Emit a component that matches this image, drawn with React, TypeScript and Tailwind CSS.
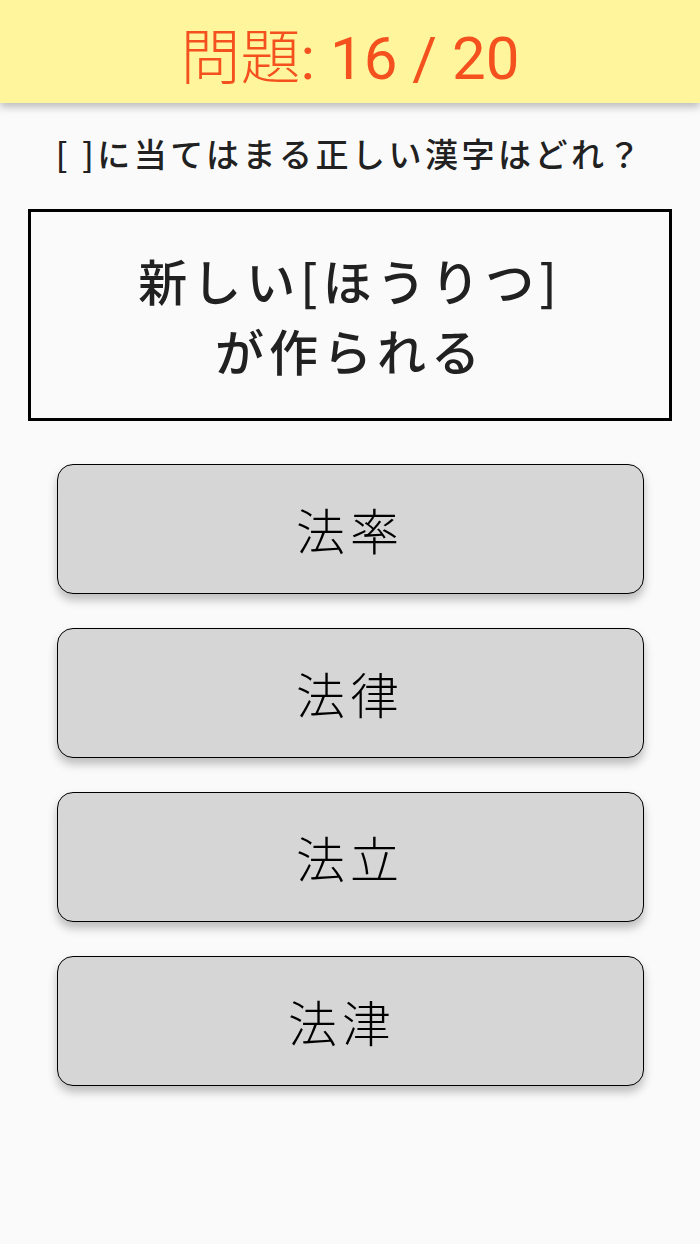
import React from "react";

const FONT = { fontFamily: '"Noto Sans CJK JP", "Noto Sans", sans-serif' };
const HFONT = { fontFamily: 'Roboto, "Noto Sans CJK JP", sans-serif' };

export default function App() {
  const options = ["法率", "法律", "法立", "法津\u00a0"];
  return (
    <div className="w-[700px] h-[1244px] bg-[#fafafa] flex flex-col" style={FONT}>
      <div className="h-[103px] bg-[#fff59d] flex items-center justify-center shadow-[0_4px_8px_rgba(0,0,0,0.25)] relative z-10">
        <span className="text-[60px] text-[#f4511e] leading-none pt-[8px]" style={HFONT}>
          <span className="font-light" style={FONT}>問題</span>
          <span className="font-normal">: 16 / 20</span>
        </span>
      </div>
      <div className="flex flex-col items-center">
        <div className="mt-[30px] text-[33px] leading-[40px] text-[#212121] tracking-[3.5px] font-medium">
          [ ]に当てはまる正しい漢字はどれ？
        </div>
        <div className="mt-[36px] w-[644px] h-[212px] border-[3px] border-black flex flex-col items-center justify-center text-[49px] leading-[70px] font-medium text-[#212121] tracking-[5px]">
          <div>新しい[ほうりつ]</div>
          <div>が作られる</div>
        </div>
        <div className="mt-[43px] flex flex-col gap-[34px]">
          {options.map((o) => (
            <div
              key={o}
              className="w-[587px] h-[130px] bg-[#d6d6d6] border-[1.5px] border-black rounded-[16px] flex items-center justify-center text-[49px] text-black tracking-[5px] font-light shadow-[0_6px_10px_rgba(0,0,0,0.25)]"
            >
              {o}
            </div>
          ))}
        </div>
      </div>
    </div>
  );
}
